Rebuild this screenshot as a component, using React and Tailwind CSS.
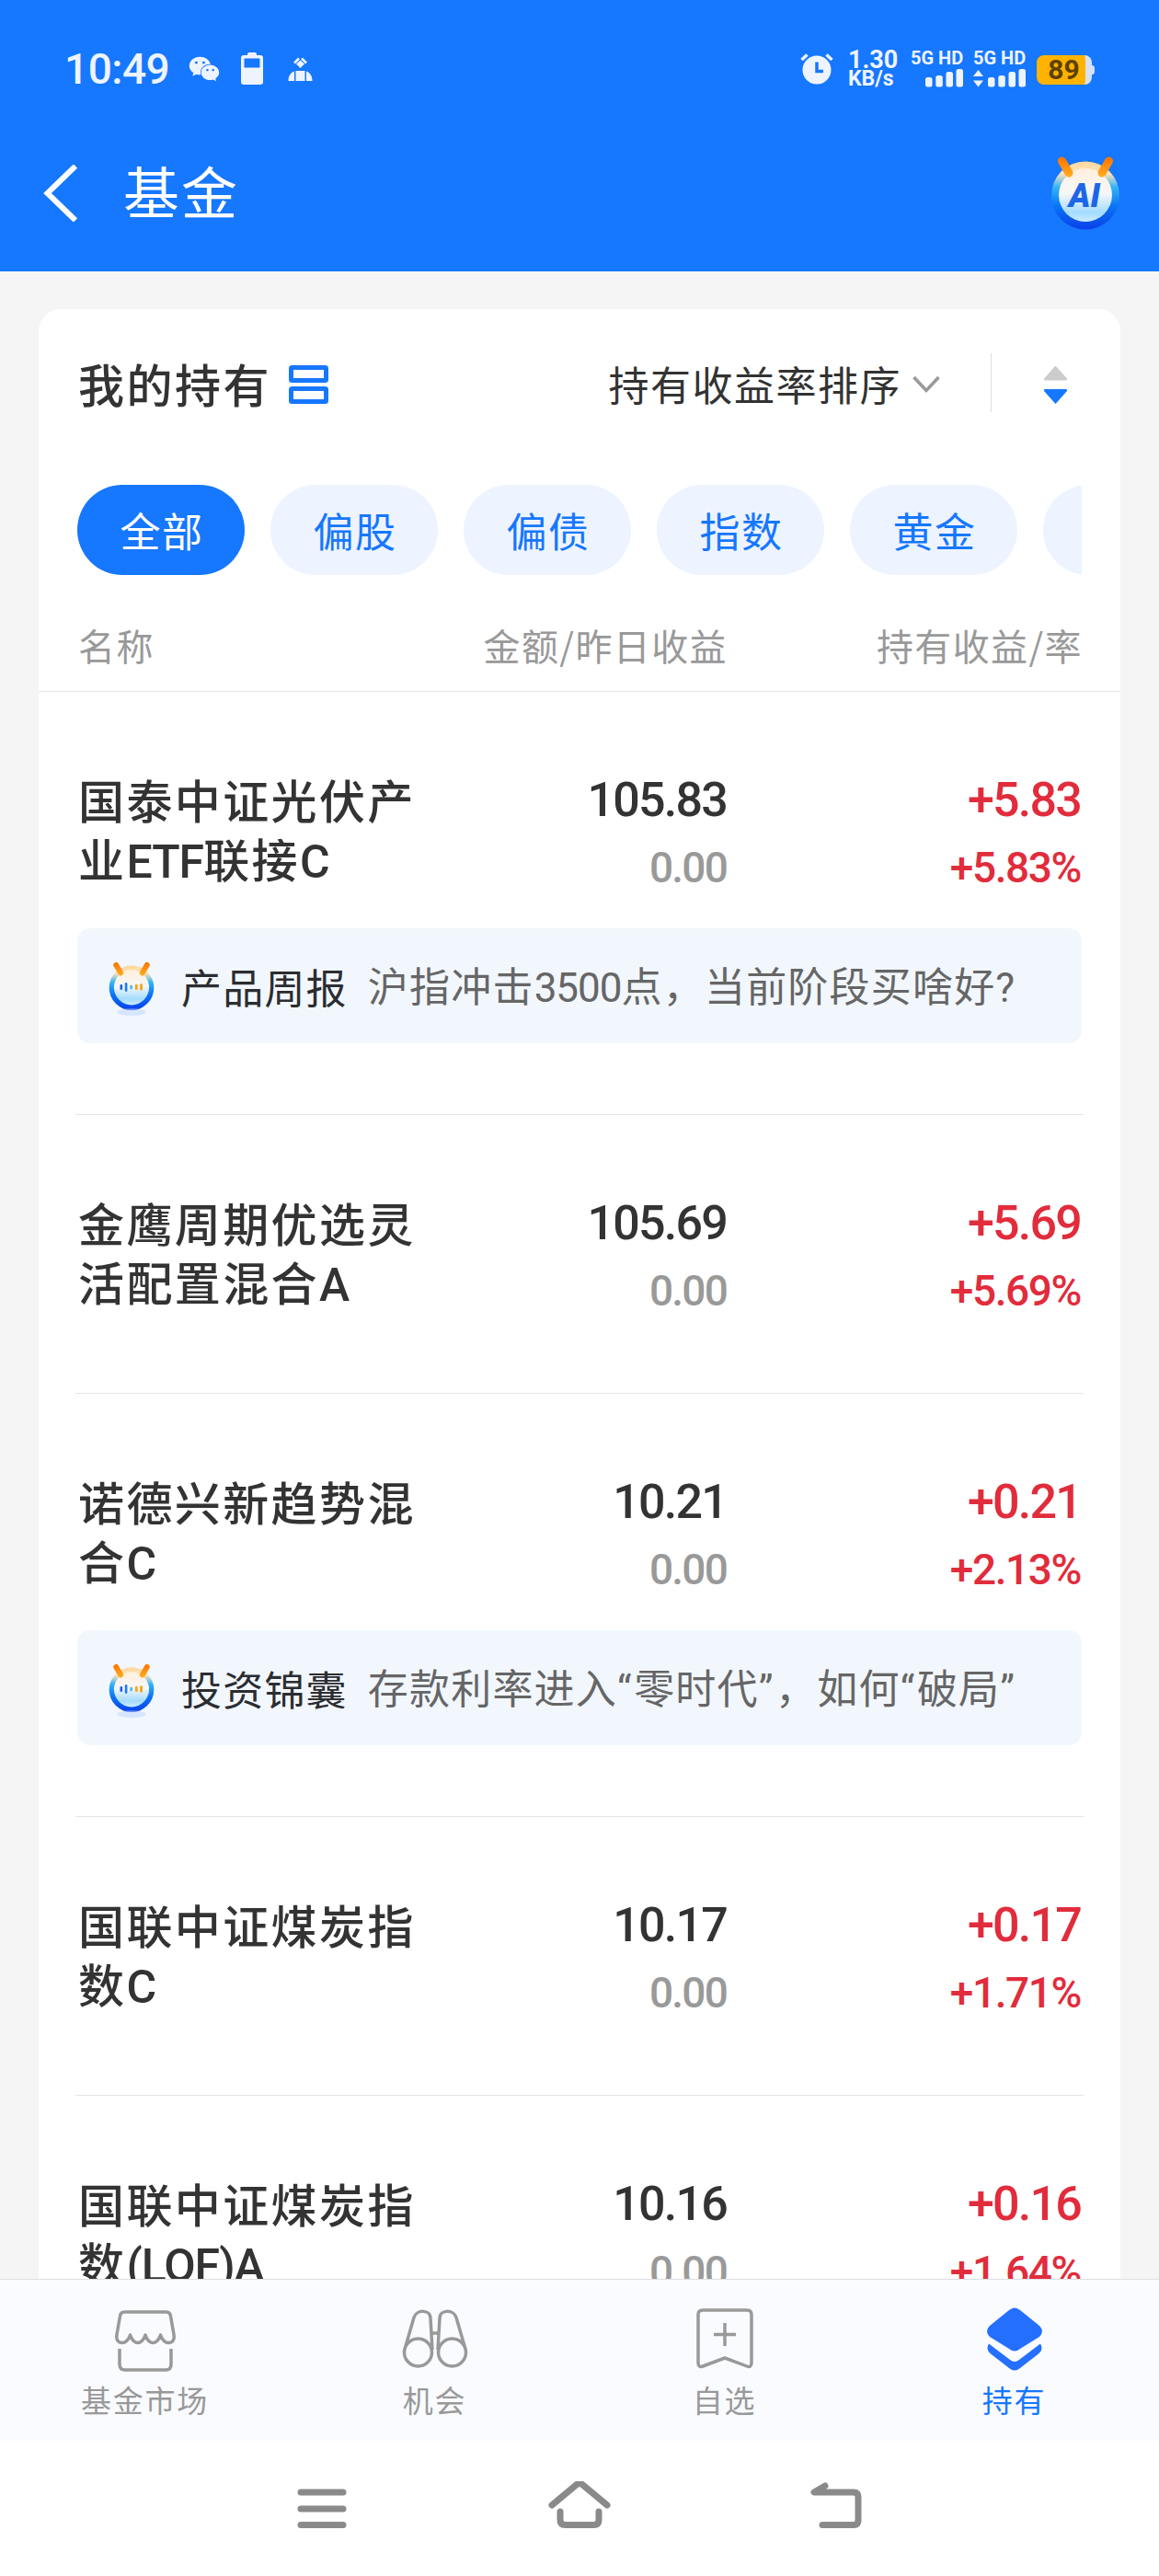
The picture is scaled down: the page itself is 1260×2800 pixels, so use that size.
import { FaWeixin } from 'react-icons/fa';

const filters = ['全部', '偏股', '偏债', '指数', '黄金', ''];

const funds = [
  {
    name: ['国泰中证光伏产', '业ETF联接C'],
    amount: '105.83',
    yesterday: '0.00',
    profit: '+5.83',
    rate: '+5.83%',
    tip: { title: '产品周报', text: '沪指冲击3500点，当前阶段买啥好?' },
  },
  {
    name: ['金鹰周期优选灵', '活配置混合A'],
    amount: '105.69',
    yesterday: '0.00',
    profit: '+5.69',
    rate: '+5.69%',
  },
  {
    name: ['诺德兴新趋势混', '合C'],
    amount: '10.21',
    yesterday: '0.00',
    profit: '+0.21',
    rate: '+2.13%',
    tip: { title: '投资锦囊', text: '存款利率进入“零时代”，如何“破局”' },
  },
  {
    name: ['国联中证煤炭指', '数C'],
    amount: '10.17',
    yesterday: '0.00',
    profit: '+0.17',
    rate: '+1.71%',
  },
  {
    name: ['国联中证煤炭指', '数(LOF)A'],
    amount: '10.16',
    yesterday: '0.00',
    profit: '+0.16',
    rate: '+1.64%',
  },
];

// Latin runs get their own font and tighter tracking than the Chinese text
function MixedText({ text }) {
  return text.split(/([A-Za-z0-9()?“”]+)/).map((part, i) => {
    if (i % 2 === 0) return part;
    const tracking = /[“”?]/.test(part) ? 'tracking-[2.6px]' : 'tracking-[-1px]';
    return (
      <span key={i} className={`font-['Roboto',sans-serif] ${tracking}`}>{part}</span>
    );
  });
}

function SignalBars() {
  return (
    <svg className="w-[42px] h-5" viewBox="0 0 42 20" fill="#eef4ff">
      <rect x="0" y="9" width="7.5" height="10.5" rx="2.5" />
      <rect x="11.3" y="7" width="7.5" height="12.5" rx="2.5" />
      <rect x="22.5" y="3" width="7.5" height="16.5" rx="2.5" />
      <rect x="33.5" y="0" width="7.5" height="19.5" rx="2.5" />
    </svg>
  );
}

function Robot({ id, className, children }) {
  return (
    <svg className={className} viewBox="0 0 76 82" fill="none" overflow="visible">
      <defs>
        <linearGradient id={`${id}-ring`} x1="38" y1="8" x2="38" y2="81" gradientUnits="userSpaceOnUse">
          <stop offset="0" stopColor="#ffd9a0" />
          <stop offset="0.16" stopColor="#ffe3bb" />
          <stop offset="0.36" stopColor="#35b4f5" />
          <stop offset="0.65" stopColor="#0a73f5" />
          <stop offset="1" stopColor="#0a3fea" />
        </linearGradient>
        <linearGradient id={`${id}-face`} x1="38" y1="14" x2="38" y2="74" gradientUnits="userSpaceOnUse">
          <stop offset="0" stopColor="#fff0dd" />
          <stop offset="0.45" stopColor="#f6f7f8" />
          <stop offset="0.8" stopColor="#a3dcff" />
          <stop offset="1" stopColor="#d5efff" />
        </linearGradient>
        <linearGradient id={`${id}-horn`} x1="0" y1="2" x2="0" y2="24" gradientUnits="userSpaceOnUse">
          <stop offset="0" stopColor="#ff7300" />
          <stop offset="1" stopColor="#ffb023" />
        </linearGradient>
      </defs>
      <circle cx="38" cy="43.5" r="37" fill={`url(#${id}-ring)`} />
      <circle cx="38" cy="43" r="29" fill={`url(#${id}-face)`} />
      <path d="M12.5 6L20 19M63.500 6L56 19" stroke={`url(#${id}-horn)`} strokeWidth="9" strokeLinecap="round" />
      {children}
    </svg>
  );
}

function StatusBar() {
  return (
    <div className="h-[150px] pl-[70px] pr-[70px] flex items-center justify-between text-[#eef4ff] font-['Roboto',sans-serif]">
      <div className="flex items-center">
        <span className="w-[135px] text-[46px] leading-none font-medium tracking-[-0.5px]">10:49</span>
        <FaWeixin className="w-[34px] h-[34px]" />
        <svg className="ml-[23px] w-6 h-9" viewBox="0 0 24 36" fill="currentColor">
          <rect x="7" y="0" width="10" height="6" rx="2" />
          <path fillRule="evenodd" d="M3 3h18a3 3 0 013 3v26a3 3 0 01-3 3H3a3 3 0 01-3-3V6a3 3 0 013-3zm.5 3.500v10h17v-10z" />
        </svg>
        <svg className="ml-[27px] w-[27px] h-[27px]" viewBox="0 0 27 27" fill="currentColor">
          <path d="M13.500 3.500l4.500 4-4.500 4.500-4.500-4.500z" />
          <path d="M7 6.500l5-5M20 6.500l-5-5" stroke="currentColor" strokeWidth="2.500" />
          <path d="M8.500 15h10v11h-10zM7 15.500V26H.5c0-6 3-9.500 6.500-10.500zM20 15.500V26h6.500c0-6-3-9.500-6.500-10.500z" />
        </svg>
      </div>

      <div className="flex items-center">
        <svg className="w-9 h-[34px]" viewBox="0 0 36 34" fill="none">
          <circle cx="18" cy="18" r="15.500" fill="#eef4ff" />
          <path d="M1.500 7l6-5.500M34.500 7l-6-5.500" stroke="#eef4ff" strokeWidth="3.500" />
          <path d="M18 9.500v10h7" stroke="#1677ff" strokeWidth="3.500" />
        </svg>
        <div className="ml-4 w-[68px] flex flex-col font-bold">
          <span className="text-[27px] leading-[22px]">1.30</span>
          <span className="text-[23px] leading-[20px]">KB/s</span>
        </div>
        <div className="w-[68px] flex flex-col gap-1">
          <span className="text-[20px] leading-[16px] font-bold whitespace-nowrap">5G HD</span>
          <div className="w-[58px] flex justify-end"><SignalBars /></div>
        </div>
        <div className="w-[69px] flex flex-col gap-1">
          <span className="text-[20px] leading-[16px] font-bold whitespace-nowrap">5G HD</span>
          <div className="w-[58px] flex justify-between">
            <svg className="w-[11px] h-5" viewBox="0 0 11 20" fill="#eef4ff">
              <path d="M5.500 1l5.500 7H0zM5.500 19.500l5.500-7H0z" />
            </svg>
            <SignalBars />
          </div>
        </div>
        <div className="flex items-center pt-[2px]">
          <div className="w-[60px] h-8 rounded-[8px] border-r-[7px] border-[#d6e2f5] bg-[#ffb300] flex items-center justify-center">
            <span className="text-[30px] leading-none font-bold text-[#5c4100] pl-[6px]">89</span>
          </div>
          <div className="w-[3px] h-[10px] rounded-r-[3px] bg-[#d6e2f5]" />
        </div>
      </div>
    </div>
  );
}

function Tip({ id, tip }) {
  return (
    <div className="mt-[41px] h-[125px] rounded-[14px] bg-[#f2f7fe] flex items-center text-[44px] tracking-[1.2px] whitespace-nowrap">
      <Robot id={id} className="ml-[34px] w-[50px] h-[54px]">
        <ellipse cx="38" cy="84" rx="24" ry="6" fill="#bcd6ff" opacity="0.5" />
        <path d="M21 40v5" stroke="#1c5ff0" strokeWidth="4" strokeLinecap="round" />
        <path d="M29 37v11" stroke="#1c7df0" strokeWidth="4" strokeLinecap="round" />
        <path d="M37.500 41v3" stroke="#4ab0f0" strokeWidth="4" strokeLinecap="round" />
        <path d="M46 40v5M54 39v7" stroke="#f5a623" strokeWidth="4.500" strokeLinecap="round" />
      </Robot>
      <span className="ml-[29px] text-[#2b2d31]">{tip.title}</span>
      <span className="ml-[22px] text-[#666]"><MixedText text={tip.text} /></span>
    </div>
  );
}

function FundRow({ fund, index, last }) {
  return (
    <div className={fund.tip ? 'shrink-0 h-[460px]' : 'shrink-0 h-[303px]'}>
      <div className={`h-full mx-[40px] px-[2px] pt-[84px] ${last ? '' : 'border-b border-[#e6e6e6]'}`}>
        <div className="h-[132px] flex text-[#333]">
          <div className="w-[380px] text-[50px] leading-[64px] font-medium tracking-[2.4px] whitespace-nowrap pl-px">
            {fund.name.map((line) => (
              <div key={line} className="h-16"><MixedText text={line} /></div>
            ))}
          </div>
          <div className="w-[326px] pt-[5px] text-right font-medium font-['Roboto',sans-serif]">
            <div className="h-[58px] text-[52px] leading-[58px] tracking-[-1.8px]">{fund.amount}</div>
            <div className="mt-[19px] text-[46px] leading-[50px] tracking-[-1.8px] text-[#999]">{fund.yesterday}</div>
          </div>
          <div className="flex-1 pt-[5px] pr-px text-right font-medium font-['Roboto',sans-serif] text-[#e12c3c]">
            <div className="h-[58px] text-[52px] leading-[58px] tracking-[-1.8px]">{fund.profit}</div>
            <div className="mt-[19px] text-[46px] leading-[50px] tracking-[-1.4px]">{fund.rate}</div>
          </div>
        </div>
        {fund.tip && <Tip id={`tip-${index}`} tip={fund.tip} />}
      </div>
    </div>
  );
}

function Tab({ label, active, children }) {
  return (
    <div className={`w-[315px] flex flex-col items-center ${active ? 'text-[#1677ff]' : 'text-[#999]'}`}>
      <svg className="w-[80px] h-[76px] mt-[28px]" viewBox="0 0 80 76" fill="none" stroke="currentColor" strokeWidth="3.500" strokeLinejoin="round">
        {children}
      </svg>
      <span className="text-[33px] leading-[52px] tracking-[1.8px]">{label}</span>
    </div>
  );
}

export default function App() {
  return (
    <div className="w-[1260px] h-[2800px] overflow-hidden flex flex-col bg-[#f5f5f5] font-['Noto_Sans_CJK_SC',sans-serif]">
      {/* Header */}
      <header className="h-[295px] shrink-0 bg-[#1677ff] text-white">
        <StatusBar />
        <div className="h-[120px] pl-[47px] pr-[42px] flex items-center">
          <svg className="w-[38px] h-[62px]" viewBox="0 0 38 62" fill="none" stroke="currentColor" strokeWidth="6">
            <path d="M35 1.500L4.500 31 35 60.500" />
          </svg>
          <h1 className="ml-[49px] pb-[7px] text-[61px] leading-none tracking-[2px] font-normal">基金</h1>
          <Robot id="ai" className="ml-auto w-[76px] h-[82px]">
            <text x="37" y="56" textAnchor="middle" fontFamily="Roboto" fontWeight="900" fontStyle="italic" fontSize="36" fill="#1c66e8">AI</text>
          </Robot>
        </div>
      </header>

      {/* Holdings */}
      <main className="h-[2182px] shrink-0 px-[42px] pt-[41px] overflow-hidden">
        <section className="bg-white rounded-t-[24px] flex flex-col">
          <div className="h-[164px] shrink-0 pl-[43px] pr-[57px] flex items-center">
            <h2 className="pb-1 text-[50px] leading-none font-medium tracking-[2.500px] text-[#333]">我的持有</h2>
            <svg className="ml-[19px] w-[43px] h-[42px]" viewBox="0 0 43 42" fill="none" stroke="#1677ff" strokeWidth="5">
              <rect x="2.500" y="2.500" width="38" height="14" rx="1" />
              <rect x="2.500" y="25.500" width="38" height="14" rx="1" />
            </svg>
            <span className="ml-auto pb-[2px] text-[44px] leading-none tracking-[1.500px] text-[#333]">持有收益率排序</span>
            <svg className="ml-[12px] w-[30px] h-5" viewBox="0 0 30 20" fill="none" stroke="#999" strokeWidth="3.500">
              <path d="M1.500 2L15 16.500 28.500 2" />
            </svg>
            <div className="ml-[55px] mb-1 w-px h-16 bg-[#e0e0e0]" />
            <svg className="ml-[56px] w-[27px] h-[44px]" viewBox="0 0 27 44">
              <path d="M13.500 1.500L26 15.500Q26.500 17.500 25 17.500H2Q.5 17.500 1 15.500z" fill="#ccc" />
              <path d="M13.500 43L26 29Q26.500 27 25 27H2Q.5 27 1 29z" fill="#1677ff" />
            </svg>
          </div>

          <div className="mt-[27px] mx-[42px] h-[98px] flex gap-7 overflow-hidden shrink-0">
            {filters.map((label, i) => (
              <div
                key={i}
                className={`w-[182px] h-[98px] shrink-0 rounded-full flex items-center justify-center text-[44px] tracking-[1.5px] pl-[2px] ${
                  i === 0 ? 'bg-[#1677ff] text-white' : 'bg-[#edf4ff] text-[#1677ff]'
                }`}
              >
                {label}
              </div>
            ))}
          </div>

          <div className="h-[127px] shrink-0 pt-[27px] pl-[43px] pr-[41px] flex text-[40px] leading-[98px] tracking-[1.4px] text-[#999] border-b border-[#e6e6e6]">
            <span className="w-[380px]">名称</span>
            <span className="w-[326px] text-right">金额/昨日收益</span>
            <span className="flex-1 text-right">持有收益/率</span>
          </div>

          {funds.map((fund, i) => (
            <FundRow key={i} fund={fund} index={i} last={i === funds.length - 1} />
          ))}
        </section>
      </main>

      {/* Tabs */}
      <nav className="h-[176px] shrink-0 border-t border-[#dcdfe4] bg-[#f9fbff] flex">
        <Tab label="基金市场">
          <path d="M17.500 7h45q4.500 0 5 4.500l3.500 20c1 6-1.500 9-6 9s-6.500-3-8.500-8.500c-2 5.500-4.500 8.500-8.250 8.500s-6.250-3-8.250-8.500c-2 5.500-4.500 8.500-8.250 8.500s-6.250-3-8.250-8.500c-2 5.500-4 8.500-8.500 8.500s-7-3-6-9l3.500-20q.5-4.500 5-4.500z" />
          <path d="M12 47v17q0 6 6 6h44q6 0 6-6V47" />
        </Tab>
        <Tab label="机会">
          <circle cx="21.500" cy="51" r="15" />
          <circle cx="58.500" cy="51" r="15" />
          <path d="M8 44l9-31c3-9 18-9 18 1l2 34M72 44l-9-31c-3-9-18-9-18 1l-2 34M36 30h8" />
        </Tab>
        <Tab label="自选">
          <path d="M16 5h48q5 0 5 5v52q0 6-5 4L40 57 16 66q-5 2-5-4V10q0-5 5-5z" />
          <path d="M40 19v25M28 31.500h24" />
        </Tab>
        <Tab label="持有" active>
          <g fill="#256fff" stroke="none">
            <path d="M34 5q6-5 12 0l21 17q6 6 0 12L46 47q-6 5-12 0L13 34q-6-6 0-12z" />
            <path d="M12 41.500L35 59q5 4 10 0l23-17.500q4 6-2 11L46 68q-6 5-12 0L14 52.500q-6-5-2-11z" />
          </g>
        </Tab>
      </nav>

      {/* System navigation */}
      <div className="flex-1 bg-white flex items-center justify-center gap-[210px]">
        <svg className="w-[70px] h-[60px]" viewBox="0 0 70 60" stroke="#8a8a8a" strokeWidth="7" strokeLinecap="round">
          <path d="M12 12h46M12 30h46M12 47.500h46" />
        </svg>
        <svg className="w-[70px] h-[60px]" viewBox="0 0 70 60" fill="none" stroke="#8a8a8a" strokeWidth="7" strokeLinecap="round" strokeLinejoin="round">
          <path d="M5 26L32 3.500q3-2 6 0L65 26M14 33v9q0 5.500 5.500 5.500h31q5.500 0 5.500-5.500v-9" />
        </svg>
        <svg className="w-[70px] h-[60px]" viewBox="0 0 70 60" fill="none" stroke="#8a8a8a" strokeWidth="7" strokeLinecap="round" strokeLinejoin="round">
          <path d="M22 5L10 12h43q5 0 5 5v25.500q0 5-5 5H19" />
        </svg>
      </div>
    </div>
  );
}
